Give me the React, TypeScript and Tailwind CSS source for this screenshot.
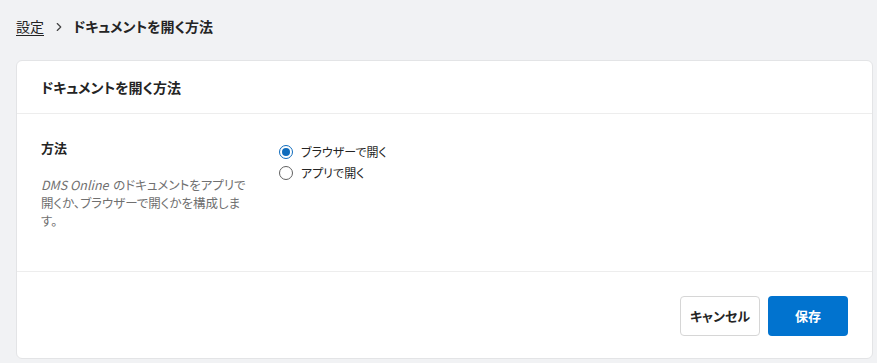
import { ChevronRight } from 'lucide-react'

const font = "font-['Segoe_UI','Noto_Sans_CJK_JP',sans-serif] [font-feature-settings:'palt']"

function Radio({ checked, label }: { checked?: boolean; label: string }) {
  return (
    <label className="flex items-center gap-2 h-[21px] text-[12px] text-[#242424] cursor-pointer">
      <span
        className={
          'flex items-center justify-center w-[14px] h-[14px] rounded-full border ' +
          (checked ? 'border-[#0f6cbd]' : 'border-[#616161]')
        }
      >
        {checked && <span className="w-[8px] h-[8px] rounded-full bg-[#0f6cbd]" />}
      </span>
      {label}
    </label>
  )
}

export default function App() {
  return (
    <div className={`min-h-[363px] bg-[#f1f2f4] pl-4 pr-[4px] ${font}`}>
      <div className="flex items-center h-[60px] pb-[7px] text-[14px] text-[#242424]">
        <span className="underline underline-offset-[3px]">設定</span>
        <ChevronRight size={14} strokeWidth={2} className="ml-[8px] mr-[7px] text-[#424242]" />
        <span className="font-bold">ドキュメントを開く方法</span>
      </div>

      <div className="bg-white border border-[#e3e4e6] rounded-[6px]">
        <div className="flex items-center h-[53px] px-6 border-b border-[#ededed]">
          <h1 className="text-[14px] font-bold text-[#242424]">ドキュメントを開く方法</h1>
        </div>

        <div className="flex px-6 pt-[24px] h-[158px] border-b border-[#ededed]">
          <div className="w-[238px] shrink-0">
            <div className="text-[13px] font-bold text-[#242424] leading-[20px]">方法</div>
            <p className="mt-[18px] w-[210px] text-[12.5px] leading-[18px] text-[#707070]">
              <i className="pr-[2px]">DMS Online</i> のドキュメントをアプリで開くか、ブラウザーで開くかを構成します。
            </p>
          </div>
          <div className="flex flex-col pt-[3px]">
            <Radio checked label="ブラウザーで開く" />
            <Radio label="アプリで開く" />
          </div>
        </div>

        <div className="flex justify-end gap-2 px-6 pt-[24px] pb-[22px]">
          <button className="w-[80px] h-[40px] rounded-[4px] border border-[#d6d6d6] bg-white text-[13px] font-semibold text-[#242424]">
            キャンセル
          </button>
          <button className="w-[80px] h-[40px] rounded-[4px] bg-[#0173cf] text-[13px] font-bold text-white">
            保存
          </button>
        </div>
      </div>
    </div>
  )
}
